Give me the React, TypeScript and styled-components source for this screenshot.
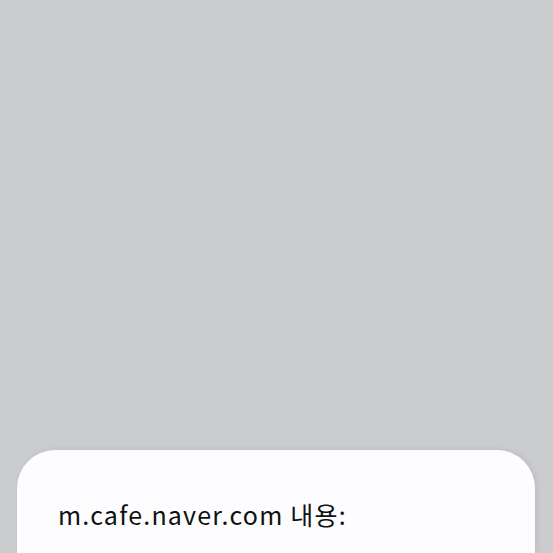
import React from 'react';
import styled, { createGlobalStyle } from 'styled-components';

const GlobalStyle = createGlobalStyle`
  html, body {
    margin: 0;
    padding: 0;
    height: 100%;
    background: #cbcccd;
  }
  #root {
    height: 100%;
  }
`;

const Screen = styled.div`
  height: 100%;
  display: flex;
  flex-direction: column;
  justify-content: flex-end;
  overflow: hidden;
`;

const Sheet = styled.div`
  margin: 0 18px 0 17px;
  height: 103px;
  box-sizing: border-box;
  background: #fdfdff;
  border-radius: 38px 38px 0 0;
  box-shadow: 2px 0 6px rgba(0, 0, 0, 0.08);
  padding: 44px 0 0 41px;
`;

const Title = styled.div`
  font-family: "Noto Sans CJK KR", "Noto Sans", sans-serif;
  font-size: 25px;
  font-weight: 400;
  line-height: 40px;
  color: #111;
  letter-spacing: 1.2px;
`;

export default function App() {
  return (
    <>
      <GlobalStyle />
      <Screen>
        <Sheet>
          <Title>m.cafe.naver.com 내용:</Title>
        </Sheet>
      </Screen>
    </>
  );
}
